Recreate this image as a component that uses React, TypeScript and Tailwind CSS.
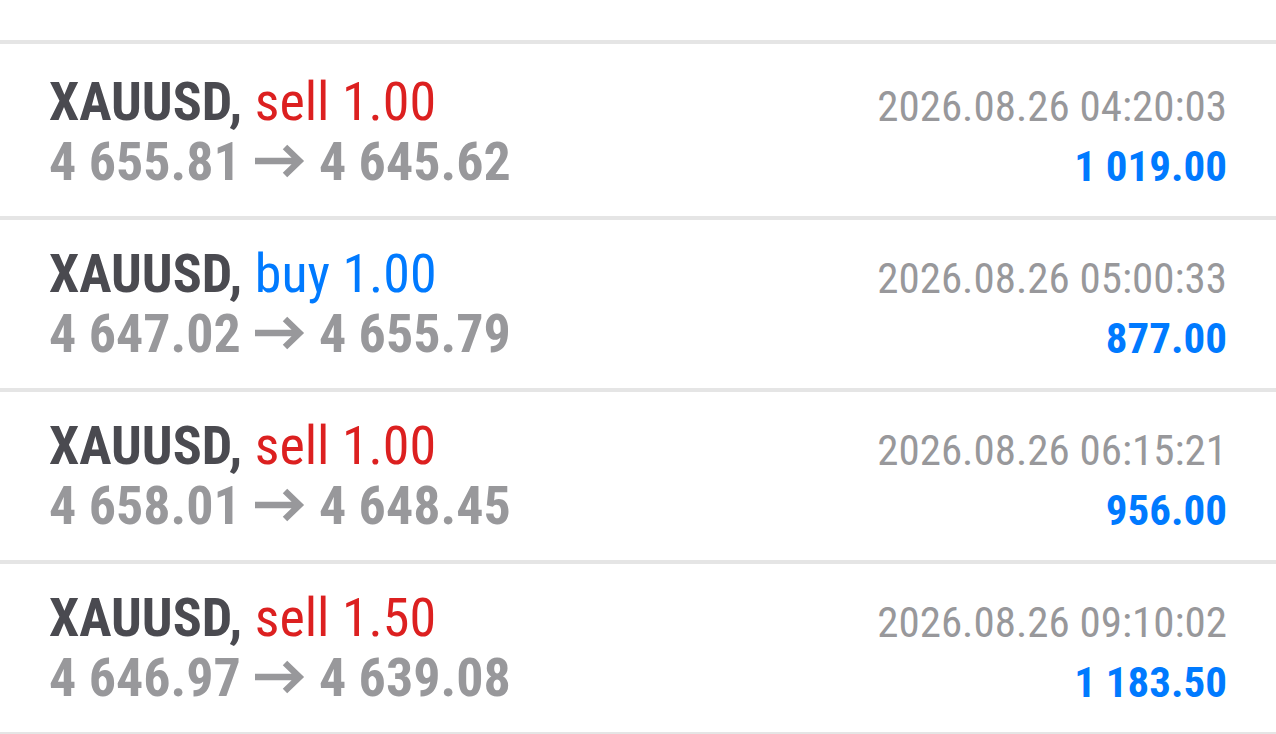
import React from 'react';

type Deal = {
    symbol: string;
    side: 'buy' | 'sell';
    volume: string;
    open: string;
    close: string;
    time: string;
    profit: string;
};

const deals: Deal[] = [
    { symbol: 'XAUUSD', side: 'sell', volume: '1.00', open: '4 655.81', close: '4 645.62', time: '2026.08.26 04:20:03', profit: '1 019.00' },
    { symbol: 'XAUUSD', side: 'buy', volume: '1.00', open: '4 647.02', close: '4 655.79', time: '2026.08.26 05:00:33', profit: '877.00' },
    { symbol: 'XAUUSD', side: 'sell', volume: '1.00', open: '4 658.01', close: '4 648.45', time: '2026.08.26 06:15:21', profit: '956.00' },
    { symbol: 'XAUUSD', side: 'sell', volume: '1.50', open: '4 646.97', close: '4 639.08', time: '2026.08.26 09:10:02', profit: '1 183.50' },
];

const Arrow = () => (
    <svg className="mx-3.5 h-9 w-[50px]" viewBox="0 0 50 36" fill="none" stroke="currentColor" strokeWidth="6.4" aria-hidden="true">
        <path d="M0 17H44M30 3L44.5 17L30 31" />
    </svg>
);

const DealRow = ({ deal }: { deal: Deal }) => (
    <li className="flex items-start justify-between border-b-4 border-[#e5e5e5] px-[49px] pt-6 pb-5">
        <div className="text-[54px] leading-[60px]">
            <p className="font-bold text-[#4a4a50]">
                {deal.symbol},{' '}
                <span className={deal.side === 'sell' ? 'font-normal text-[#dc2020]' : 'font-normal text-[#007aff]'}>
                    {deal.side} {deal.volume}
                </span>
            </p>
            <p className="flex items-center font-bold text-[#98989b]">
                {deal.open}
                <Arrow />
                {deal.close}
            </p>
        </div>
        <div className="pt-1 text-right text-[43px] leading-[60px]">
            <p className="text-[#98989b]">{deal.time}</p>
            <p className="font-bold text-[#007aff]">{deal.profit}</p>
        </div>
    </li>
);

const App: React.FC = () => {
    return (
        <main className="bg-white pt-10 font-['Roboto_Condensed','Roboto',sans-serif]">
            <ul className="border-t-4 border-[#e5e5e5] pt-1">
                {deals.map((deal) => (
                    <DealRow key={deal.time} deal={deal} />
                ))}
            </ul>
        </main>
    );
};

export default App;
